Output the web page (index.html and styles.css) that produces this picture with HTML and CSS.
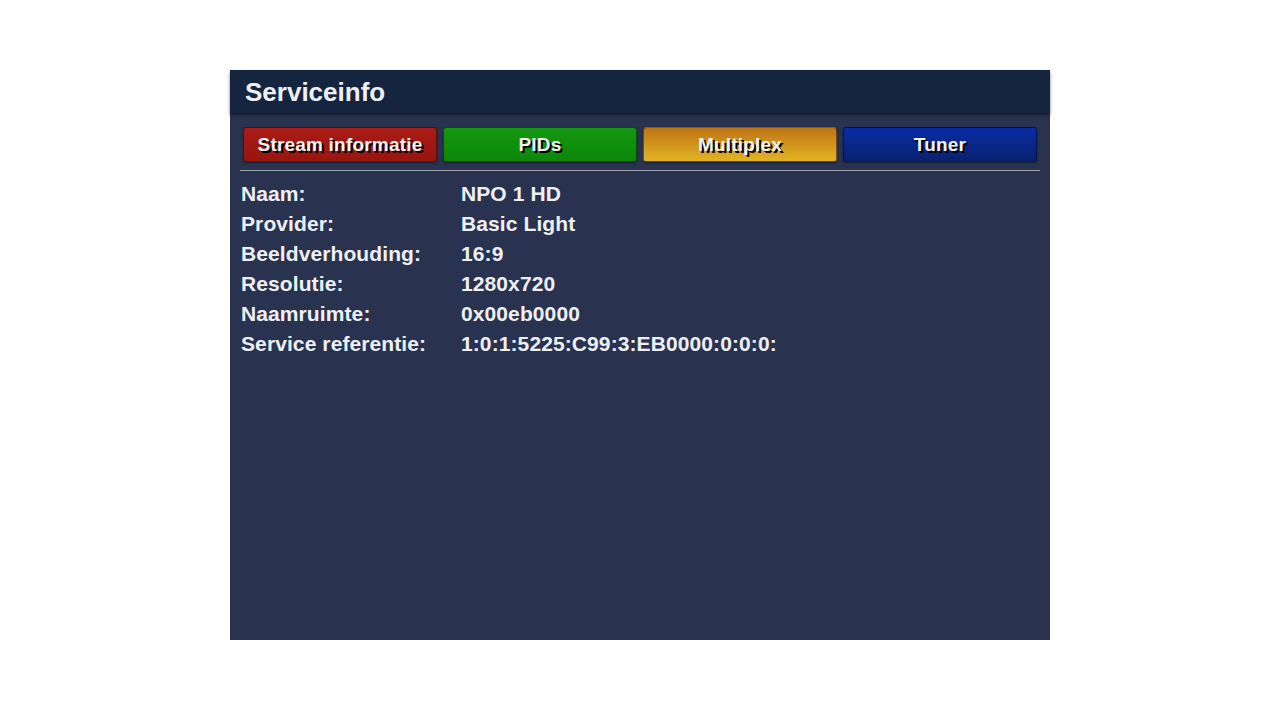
FILE: index.html
```html
<!DOCTYPE html>
<html lang="nl">
<head>
  <meta charset="UTF-8" />
  <meta name="viewport" content="width=device-width, initial-scale=1.0"/>
  <title>Serviceinfo</title>
  <link rel="stylesheet" href="styles.css">
</head>
<body>

  <div class="screen">
    <div class="header">
      <h1>Serviceinfo</h1>
    </div>

    <div class="content">
      <div class="tabs">
        <button class="tab red">Stream informatie</button>
        <button class="tab green">PIDs</button>
        <button class="tab yellow">Multiplex</button>
        <button class="tab blue">Tuner</button>
      </div>

      <div class="info">
        <div class="row"><span class="label">Naam:</span><span class="value">NPO 1 HD</span></div>
        <div class="row"><span class="label">Provider:</span><span class="value">Basic Light</span></div>
        <div class="row"><span class="label">Beeldverhouding:</span><span class="value">16:9</span></div>
        <div class="row"><span class="label">Resolutie:</span><span class="value">1280x720</span></div>
        <div class="row"><span class="label">Naamruimte:</span><span class="value">0x00eb0000</span></div>
        <div class="row"><span class="label">Service referentie:</span><span class="value">1:0:1:5225:C99:3:EB0000:0:0:0:</span></div>
      </div>
    </div>
  </div>

</body>
</html>
```

FILE: styles.css
```css
* {
  margin: 0;
  padding: 0;
  box-sizing: border-box;
}

body {
  background-color: white;
  font-family: "Liberation Sans", Arial, sans-serif;
  padding-top: 70px;
}

.screen {
  width: 820px;
  height: 570px;
  margin: 0 auto;
  background-color: #29324f;
  display: flex;
  flex-direction: column;
}

.header {
  height: 43px;
  background-color: #16253f;
  padding-left: 15px;
  box-shadow: 0 2px 3px rgba(0, 0, 0, 0.5);
  display: flex;
  align-items: center;
}

.header h1 {
  font-size: 26px;
  font-weight: bold;
  color: #eef0f6;
  padding-top: 1px;
}

.content {
  padding: 14px 10px 0 10px;
}

.tabs {
  display: flex;
  gap: 6px;
  padding: 0 3px 8px 3px;
  border-bottom: 1px solid #a0a4b0;
}

.tab {
  width: 194px;
  height: 35px;
  border: 1px solid rgba(0, 0, 0, 0.45);
  border-radius: 3px;
  box-shadow: 0 1px 2px rgba(0, 0, 0, 0.4);
  font-family: "Liberation Sans", Arial, sans-serif;
  font-size: 19px;
  font-weight: bold;
  color: #f2f2f2;
  text-shadow: 2px 2px 0 #000;
  letter-spacing: 0.2px;
}

.tab.red {
  background: linear-gradient(#a81c16, #99150f);
}

.tab.green {
  background: linear-gradient(#149810, #0c860a);
}

.tab.yellow {
  background: linear-gradient(#be7414, #e2b424);
}

.tab.blue {
  background: linear-gradient(#0a2ca6, #08226e);
}

.info {
  padding-top: 8px;
}

.row {
  display: flex;
  height: 30px;
  align-items: center;
  font-size: 21px;
  font-weight: bold;
  color: #eef0f6;
  letter-spacing: 0.1px;
}

.label {
  width: 220px;
  padding-left: 1px;
}

.value {
  padding-left: 1px;
}
```
